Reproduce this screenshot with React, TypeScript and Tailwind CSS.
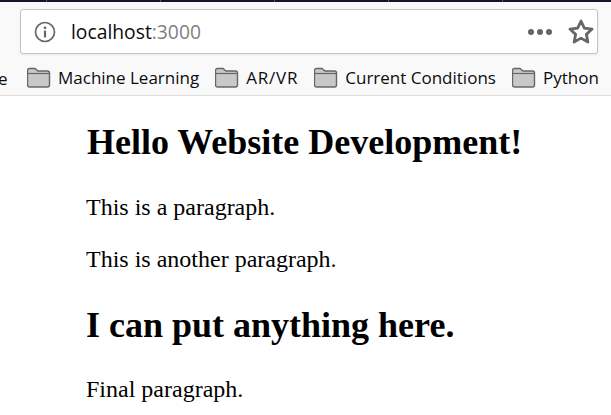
const bookmarks = ['Machine Learning', 'AR/VR', 'Current Conditions', 'Python'];

function FolderIcon() {
  return (
    <svg width="24" height="22" viewBox="1 0 24 22" className="shrink-0">
      <path d="M1.5 3.5a2 2 0 0 1 2-2h5.5l3 2.5h9.5a2 2 0 0 1 2 2v12a2 2 0 0 1-2 2h-18a2 2 0 0 1-2-2z" fill="#c8c8c8" stroke="#666" strokeWidth="1.4" />
      <path d="M1.5 6.5h22" stroke="#666" strokeWidth="1.2" fill="none" />
    </svg>
  );
}

export default function App() {
  return (
    <div className="w-[611px] h-[415px] overflow-hidden bg-white font-['Liberation_Serif',serif] text-black">
      <div className="h-[2px] bg-[#14142b] flex">
        <div className="w-[46px] shrink-0" />
        {[0, 1, 2, 3, 4].map((i) => (
          <div key={i} className="w-[114px] shrink-0 border-l border-[#55556a]" />
        ))}
      </div>
      <header className="h-[94px] bg-[#f9f9fa] border-b border-[#dcdcdc] font-['Open_Sans',sans-serif] overflow-hidden">
        <div className="mt-[7px] ml-5 w-[578px] h-[45px] bg-white border border-[#c4c4c4] rounded-[3px] flex items-center pl-[13px] pr-[2px] shadow-[0_1px_2px_rgba(0,0,0,0.08)]">
          <svg width="22" height="22" viewBox="0 0 22 22" className="shrink-0">
            <circle cx="11" cy="11" r="9.5" fill="none" stroke="#666" strokeWidth="1.7" />
            <circle cx="11" cy="6.8" r="1.4" fill="#666" />
            <rect x="9.9" y="9.6" width="2.2" height="6.8" fill="#666" />
          </svg>
          <div className="ml-[15px] text-[19.3px] leading-none text-[#0c0c0d]">
            localhost<span className="text-[#7f7f85]">:3000</span>
          </div>
          <div className="ml-auto flex items-center gap-[3px]">
            <div className="w-[6px] h-[6px] rounded-full bg-[#666]" />
            <div className="w-[6px] h-[6px] rounded-full bg-[#666]" />
            <div className="w-[6px] h-[6px] rounded-full bg-[#666]" />
          </div>
          <svg width="28" height="28" viewBox="0 0 26 26" className="ml-[15px] shrink-0">
            <path d="M13 2.8l3.1 6.6 7.2.9-5.3 4.9 1.4 7.1-6.4-3.6-6.4 3.6 1.4-7.1-5.3-4.9 7.2-.9z" fill="none" stroke="#666" strokeWidth="2.6" strokeLinejoin="round" />
          </svg>
        </div>
        <div className="relative h-[38px] mt-[5px] flex items-center text-[17px] text-[#0c0c0d] pl-[27px] gap-[16px]">
          <span className="absolute -left-[2px] top-[7px]">e</span>
          {bookmarks.map((b) => (
            <div key={b} className="flex items-center gap-[7px] whitespace-nowrap">
              <FolderIcon />
              <span className={b === 'AR/VR' ? 'tracking-[0.8px]' : ''}>{b}</span>
            </div>
          ))}
        </div>
      </header>
      <main className="pl-[86px]">
        <h1 className="text-[36px] font-bold leading-[41px] mt-[26px] ml-px">Hello Website Development!</h1>
        <p className="text-[24px] leading-[27px] mt-[31px]">This is a paragraph.</p>
        <p className="text-[24px] leading-[27px] mt-[25px]">This is another paragraph.</p>
        <h2 className="text-[36px] font-bold leading-[41px] mt-[32px]">I can put anything here.</h2>
        <p className="text-[24px] leading-[27px] mt-[30px]">Final paragraph.</p>
      </main>
    </div>
  );
}
